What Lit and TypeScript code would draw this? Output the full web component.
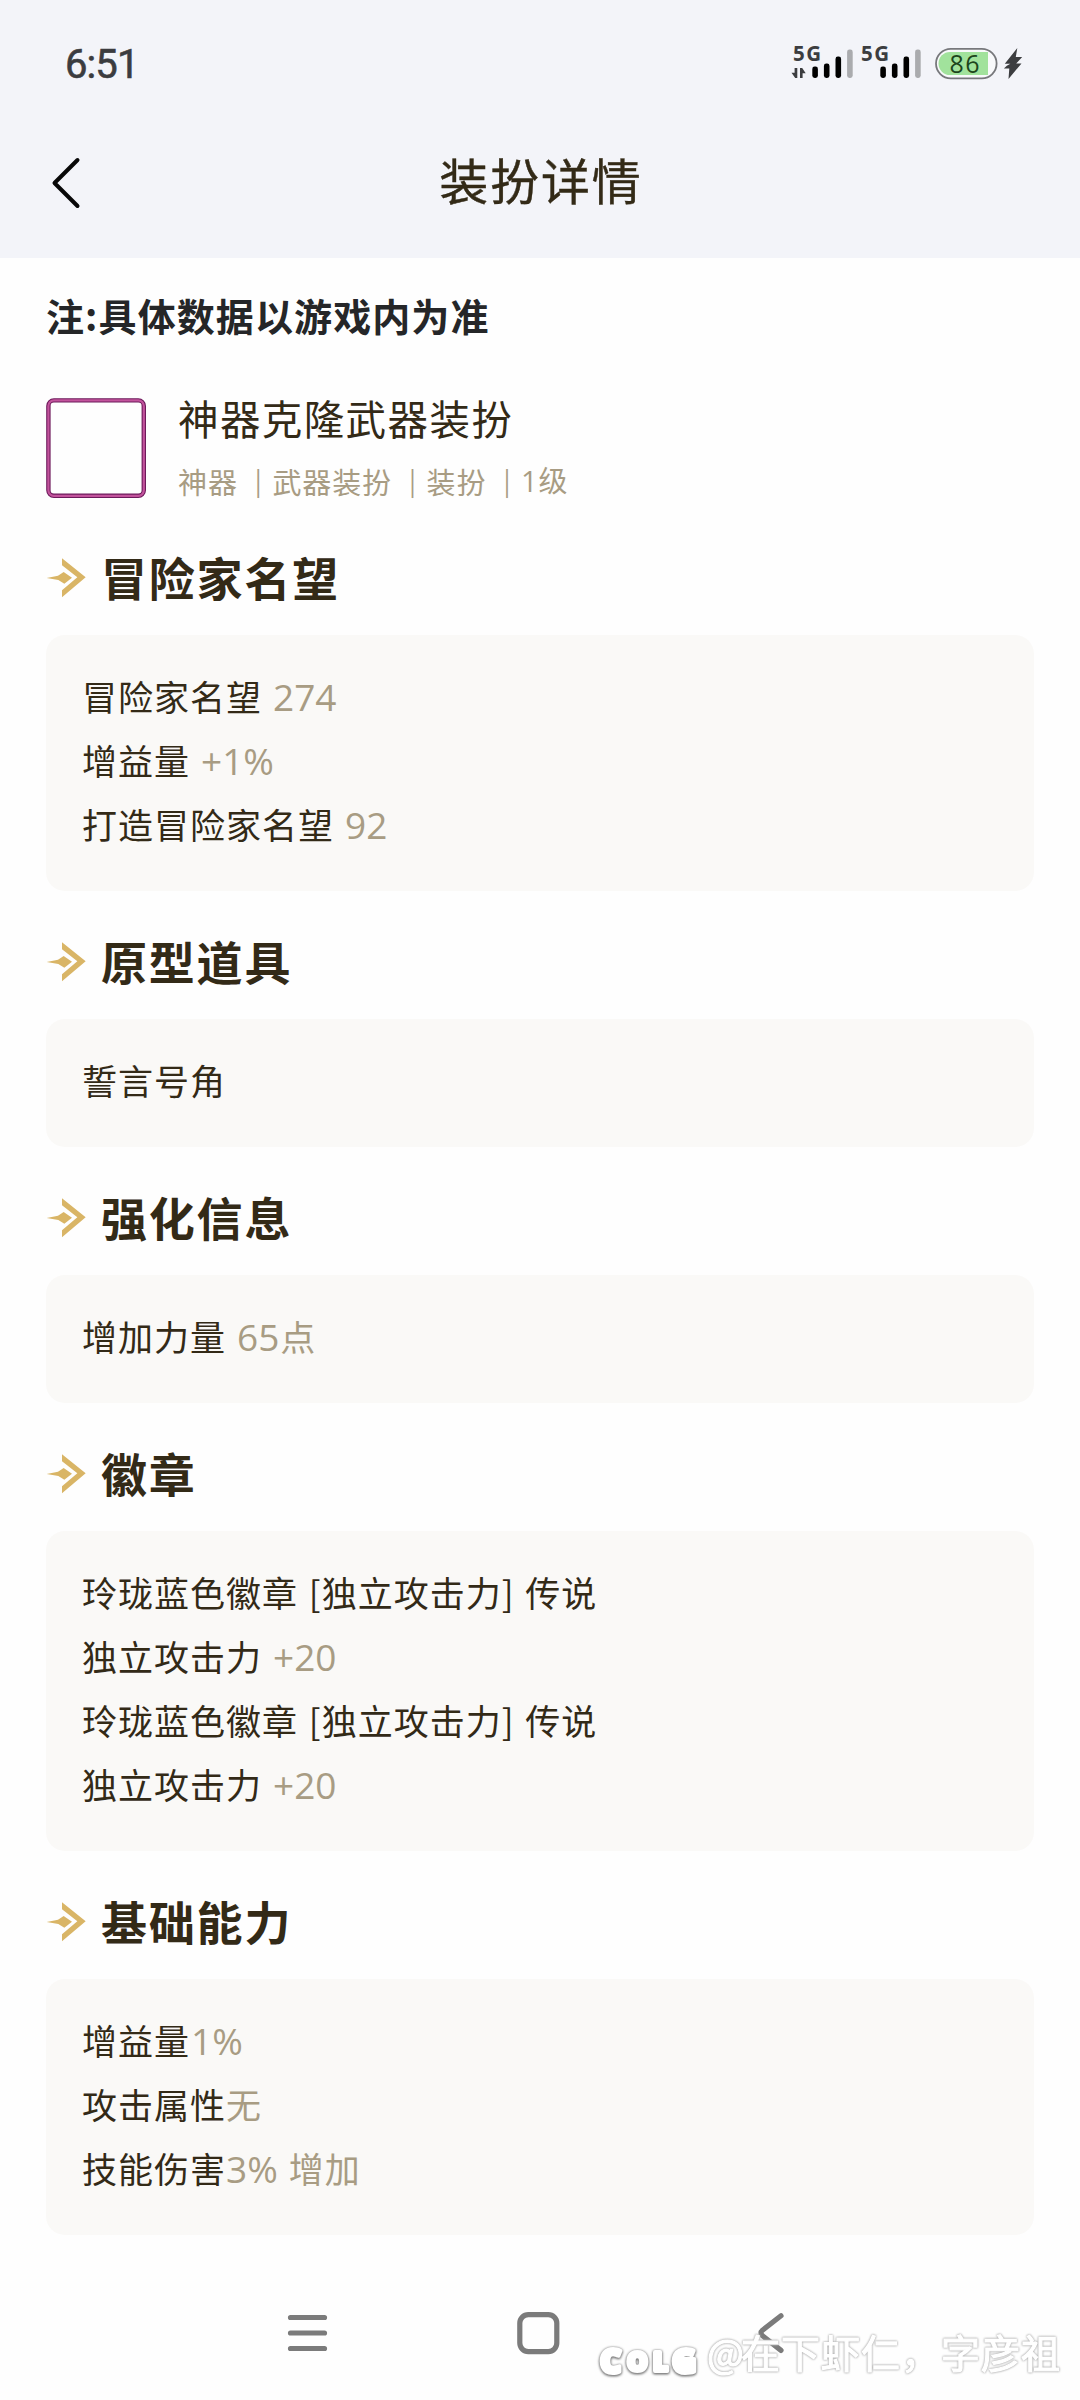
import { LitElement, html, css, svg } from "lit";
import { customElement, property } from "lit/decorators.js";

interface Part { text: string; kind: "label" | "num" | "val"; gap?: number }
interface Section { title: string; rows: Part[][] }

const label = (text: string): Part => ({ text, kind: "label" });
const num = (text: string, gap = 0): Part => ({ text, kind: "num", gap });
const val = (text: string, gap = 0): Part => ({ text, kind: "val", gap });

const SECTIONS: Section[] = [
  {
    title: "冒险家名望",
    rows: [
      [label("冒险家名望"), num("274", 11)],
      [label("增益量"), num("+1%", 11)],
      [label("打造冒险家名望"), num("92", 11)],
    ],
  },
  { title: "原型道具", rows: [[label("誓言号角")]] },
  { title: "强化信息", rows: [[label("增加力量"), num("65", 11), val("点", 1)]] },
  {
    title: "徽章",
    rows: [
      [label("玲珑蓝色徽章 [独立攻击力] 传说")],
      [label("独立攻击力"), num("+20", 11)],
      [label("玲珑蓝色徽章 [独立攻击力] 传说")],
      [label("独立攻击力"), num("+20", 11)],
    ],
  },
  {
    title: "基础能力",
    rows: [
      [label("增益量"), num("1%", 1)],
      [label("攻击属性"), val("无")],
      [label("技能伤害"), num("3%"), val("增加", 11)],
    ],
  },
];

@customElement("status-bar")
class StatusBar extends LitElement {
  static styles = css`
    :host { display: flex; height: 126px; justify-content: space-between; padding: 0 55px 0 65px; box-sizing: border-box; }
    .time { font: 400 40px/129px Roboto, sans-serif; letter-spacing: -0.9px; color: #3b3c3f; -webkit-text-stroke: 0.6px #3b3c3f; }
    .icons { display: block; width: 235px; height: 60px; margin-top: 34px; }
    .net { font: 700 20.5px "Open Sans", sans-serif; fill: #3c3d40; }
    .level { font: 500 25px "Open Sans", sans-serif; fill: #1c451c; }
  `;
  private bars(x: number) {
    return svg`
      <rect x=${x} y="22.5" width="5.6" height="11.5" rx="2.4"/>
      <rect x=${x + 11.6} y="19.5" width="5.6" height="14.5" rx="2.4"/>
      <rect x=${x + 23.2} y="12.5" width="5.6" height="21.5" rx="2.4"/>
      <rect x=${x + 34.8} y="5.5" width="5.6" height="28.5" rx="2.4" fill="#aaabae"/>`;
  }
  render() {
    return html`
      <span class="time">6:51</span>
      <svg class="icons" viewBox="0 -10 235 60">
        <text class="net" x="3" y="17.2" textLength="28">5G</text>
        <path d="M7.3 24v10H5.2L1.5 28.8h3.1V24zM10 34V24h2.2l3.5 5.2h-3.1V34z" fill="#3c3d40"/>
        ${this.bars(22.3)}
        <text class="net" x="71" y="17.2" textLength="28">5G</text>
        ${this.bars(90.3)}
        <rect x="146" y="4.8" width="60.6" height="29.6" rx="14.8" fill="#f8f9fb" stroke="#77787c" stroke-width="1.8"/>
        <path d="M160 8h38v23h-38a11.5 11.5 0 0 1 0-23z" fill="#a1e29c"/>
        <text class="level" x="159.5" y="28.6" textLength="30">86</text>
        <path d="M227.3 4 214.8 19.7h5.6l-3.6 2-2.9 2.9h5.4L218.5 35l13-15.6h-5.3l6-6.4h-6.4z" fill="#3c3d40"/>
      </svg>`;
  }
}

@customElement("section-title")
class SectionTitle extends LitElement {
  @property() text = "";
  static styles = css`
    :host { display: flex; align-items: center; height: 128px; padding: 14px 0 0; box-sizing: border-box; }
    .arrow { width: 40px; height: 40px; margin-right: 15px; flex: none; }
    .title { margin: -5px 0 0; font: 700 46px/64px "Noto Sans CJK SC", sans-serif; letter-spacing: 1.8px; color: #332a17; }
  `;
  render() {
    return html`
      <svg class="arrow" viewBox="0 0 120 120">
        <path d="M48 1 119 58 48 118V97L94 58 48 22z" fill="#d9b566"/>
        <path d="M2 60 36 53 53 42 78 59 55 77 37 66z" fill="#d9b566"/>
      </svg>
      <h2 class="title">${this.text}</h2>`;
  }
}

@customElement("info-card")
class InfoCard extends LitElement {
  @property({ attribute: false }) rows: Part[][] = [];
  static styles = css`
    :host { display: block; padding: 29px 36px 35px; border-radius: 19px; background: #faf9f7; }
    .row { height: 64px; white-space: nowrap; font: 400 35px/64px "Noto Sans CJK SC", sans-serif; letter-spacing: 1px; word-spacing: 2px; color: #332a17; }
    .num { font-family: "Open Sans", sans-serif; font-size: 37px; line-height: 1; letter-spacing: 0; color: #a89c83; }
    .val { color: #a89c83; }
  `;
  render() {
    return this.rows.map(r => html`<div class="row">${r.map(p =>
      html`<span class=${p.kind} style="margin-left:${p.gap ?? 0}px">${p.text}</span>`)}</div>`);
  }
}

@customElement("system-nav")
class SystemNav extends LitElement {
  static styles = css`
    :host { display: flex; height: 98px; align-items: center; justify-content: space-between; padding: 0 286px 0 279px; margin-top: 49px; box-sizing: border-box; }
    .icon { width: 56px; height: 56px; fill: none; stroke: #7b7b7b; stroke-width: 5.2; stroke-linecap: round; stroke-linejoin: round; }
  `;
  render() {
    return html`
      <svg class="icon" viewBox="0 0 56 56"><path d="M11.5 12.5h34M11.5 28h34M11.5 43.5h34"/></svg>
      <svg class="icon" viewBox="0 0 56 56"><rect x="10.8" y="9.6" width="37" height="37" rx="8.5"/></svg>
      <svg class="icon" viewBox="0 0 56 56"><path d="M43 10.8 24.5 25.2Q21.5 28 24.5 30.8L43 45.4"/></svg>`;
  }
}

@customElement("app-root")
class AppRoot extends LitElement {
  static styles = css`
    :host { display: block; position: relative; width: 1080px; height: 2400px; overflow: hidden; background: #fefefe; font-family: "Noto Sans CJK SC", sans-serif; }
    .head { height: 258px; background: #f3f4f9; }
    .bar { display: grid; grid-template-columns: 150px 1fr 150px; height: 114px; align-items: center; }
    .back { width: 40px; height: 60px; margin-left: 46px; }
    .title { margin: -8px 0 0; text-align: center; font-size: 49px; line-height: 70px; font-weight: 400; letter-spacing: 1.9px; text-indent: 1.9px; color: #332a17; -webkit-text-stroke: 0.4px #332a17; }
    .body { display: flex; flex-direction: column; padding: 0 46px; }
    .note { margin: 27px 0 0; height: 60px; font-size: 38px; line-height: 60px; font-weight: 700; letter-spacing: 1.1px; color: #252628; }
    .item { display: flex; gap: 32px; margin-top: 52px; height: 110px; }
    .thumb { width: 100px; height: 100px; flex: none; margin-top: 0.5px; }
    .meta { display: flex; flex-direction: column; }
    .name { height: 50px; margin-top: -4px; font-size: 40.5px; line-height: 50px; letter-spacing: 1.4px; color: #332a17; }
    .tags { display: flex; margin-top: 20px; height: 36px; font-size: 29px; line-height: 36px; letter-spacing: 0.9px; color: #a89c83; }
    .sep { width: 34.6px; padding-left: 17px; box-sizing: border-box; font-size: 26px; line-height: 34px; }
    .lvl { font-family: "Open Sans", "Noto Sans CJK SC", sans-serif; }
    .mark { position: absolute; left: 590px; top: 2320px; width: 490px; height: 80px; }
    .logo { font: 800 33px "Open Sans", sans-serif; fill: #fff; stroke: #fff; stroke-width: 4; stroke-linejoin: round; filter: drop-shadow(0 1px 1.2px #777) drop-shadow(0 0 0.8px #999); }
    .small { font-size: 26px; }
    .user { font: 400 39px "Noto Sans CJK SC", sans-serif; fill: #fff; stroke: #fff; stroke-width: 1.2; filter: drop-shadow(0 0 1px #aaa) drop-shadow(0 0 0.5px #ccc); }
  `;
  render() {
    return html`
      <header class="head">
        <status-bar></status-bar>
        <div class="bar">
          <svg class="back" viewBox="0 0 40 60"><path d="M31.5 7 8.5 30 31.5 53" fill="none" stroke="#080808" stroke-width="4" stroke-linecap="round" stroke-linejoin="round"/></svg>
          <h1 class="title">装扮详情</h1>
        </div>
      </header>
      <main class="body">
        <p class="note">注:具体数据以游戏内为准</p>
        <div class="item">
          <svg class="thumb" viewBox="0 0 100 100" fill="none">
            <rect x="2.4" y="2.4" width="95.4" height="95.4" rx="5.5" stroke="#6d1a5b" stroke-width="4.4"/>
            <rect x="2.4" y="2.4" width="95.4" height="95.4" rx="5.5" stroke="#c2539c" stroke-width="2.2"/>
          </svg>
          <div class="meta">
            <div class="name">神器克隆武器装扮</div>
            <div class="tags">
              <span>神器</span><span class="sep">|</span><span>武器装扮</span><span class="sep">|</span><span>装扮</span><span class="sep">|</span><span class="lvl">1级</span>
            </div>
          </div>
        </div>
        ${SECTIONS.map(s => html`
          <section-title .text=${s.title}></section-title>
          <info-card .rows=${s.rows}></info-card>`)}
      </main>
      <system-nav></system-nav>
      <svg class="mark" viewBox="0 0 490 80">
        <g class="logo">
          <text x="10" y="53">C</text><text class="small" x="37" y="51">O</text><text class="small" x="63" y="51">L</text><text x="82" y="53">G</text>
        </g>
        <g class="user">
          <text x="117" y="47.5" textLength="36">@</text><text x="151" y="47.5" textLength="319">在下虾仁，字彦祖</text>
        </g>
      </svg>`;
  }
}
